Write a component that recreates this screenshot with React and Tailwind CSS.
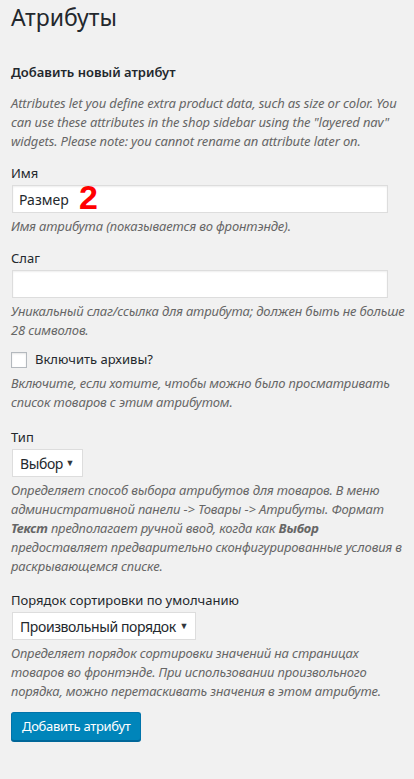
const font = { fontFamily: '"Noto Sans", "Open Sans", sans-serif' };

function Desc({ lines }) {
  return (
    <p className="text-[13px] leading-[19px] italic text-[#666] tracking-[-0.15px]">
      {lines.map((l, i) => (
        <span key={i} className="block whitespace-nowrap">
          {l}
        </span>
      ))}
    </p>
  );
}

function Arrow() {
  return <span className="text-[9px] text-[#32373c] ml-auto">▼</span>;
}

export default function App() {
  return (
    <div
      className="min-h-[779px] w-[414px] bg-[#f1f1f1] px-[11px] text-[#23282d] overflow-hidden"
      style={font}
    >
      <h1 className="pt-[3px] text-[23px] leading-[29px] font-normal">Атрибуты</h1>

      <h2 className="mt-[31px] text-[13px] leading-[19px] font-semibold">
        Добавить новый атрибут
      </h2>

      <div className="mt-[12px]">
        <Desc
          lines={[
            "Attributes let you define extra product data, such as size or color. You",
            'can use these attributes in the shop sidebar using the "layered nav"',
            "widgets. Please note: you cannot rename an attribute later on.",
          ]}
        />
      </div>

      {/* name */}
      <div className="mt-[13px]">
        <label className="block text-[13px] leading-[19px]">Имя</label>
        <div className="relative mt-[2px] w-[376px] h-[28px] ml-px bg-white border border-[#ddd] shadow-[inset_0_1px_2px_rgba(0,0,0,0.07)] flex items-center px-[6px] text-[14px]">
          Размер
          <span
            className="absolute left-[66px] top-[-6px] text-[34px] leading-[34px] font-bold text-[#f00]"
            style={{ fontFamily: '"Liberation Sans", Arial, sans-serif' }}
          >
            2
          </span>
        </div>
        <div className="mt-[4px]">
          <Desc lines={["Имя атрибута (показывается во фронтэнде)."]} />
        </div>
      </div>

      {/* slug */}
      <div className="mt-[13px]">
        <label className="block text-[13px] leading-[19px]">Слаг</label>
        <div className="mt-[2px] w-[376px] h-[28px] ml-px bg-white border border-[#ddd] shadow-[inset_0_1px_2px_rgba(0,0,0,0.07)]" />
        <div className="mt-[4px]">
          <Desc
            lines={[
              "Уникальный слаг/ссылка для атрибута; должен быть не больше",
              "28 символов.",
            ]}
          />
        </div>
      </div>

      {/* archives */}
      <div className="mt-[11px]">
        <div className="flex items-center h-[18px]">
          <span className="w-[16px] h-[16px] bg-white border border-[#b4b9be] shadow-[inset_0_1px_2px_rgba(0,0,0,0.1)]" />
          <span className="ml-[8px] text-[13px]">Включить архивы?</span>
        </div>
        <div className="mt-[5px]">
          <Desc
            lines={[
              "Включите, если хотите, чтобы можно было просматривать",
              "список товаров с этим атрибутом.",
            ]}
          />
        </div>
      </div>

      {/* type */}
      <div className="mt-[16px]">
        <label className="block text-[13px] leading-[19px]">Тип</label>
        <div className="mt-[2px] ml-px w-[71px] h-[28px] bg-white border border-[#ddd] flex items-center pl-[7px] pr-[8px] text-[14px] tracking-[-0.4px] whitespace-nowrap">
          Выбор
          <Arrow />
        </div>
        <div className="mt-[4px]">
          <p className="text-[13px] leading-[19px] italic text-[#666] tracking-[-0.15px]">
            <span className="block whitespace-nowrap">
              Определяет способ выбора атрибутов для товаров. В меню
            </span>
            <span className="block whitespace-nowrap">
              административной панели -&gt; Товары -&gt; Атрибуты. Формат
            </span>
            <span className="block whitespace-nowrap">
              <b className="font-bold">Текст</b> предполагает ручной ввод, когда как{" "}
              <b className="font-bold">Выбор</b>
            </span>
            <span className="block whitespace-nowrap">
              предоставляет предварительно сконфигурированные условия в
            </span>
            <span className="block whitespace-nowrap">раскрывающемся списке.</span>
          </p>
        </div>
      </div>

      {/* order */}
      <div className="mt-[15px]">
        <label className="block text-[13px] leading-[19px]">
          Порядок сортировки по умолчанию
        </label>
        <div className="mt-[2px] ml-px w-[184px] h-[28px] bg-white border border-[#ddd] flex items-center pl-[7px] pr-[7px] text-[14px] tracking-[-0.4px] whitespace-nowrap">
          Произвольный порядок
          <Arrow />
        </div>
        <div className="mt-[4px]">
          <Desc
            lines={[
              "Определяет порядок сортировки значений на страницах",
              "товаров во фронтэнде. При использовании произвольного",
              "порядка, можно перетаскивать значения в этом атрибуте.",
            ]}
          />
        </div>
      </div>

      <button className="mt-[11px] h-[29px] px-[10px] bg-[#0085ba] border border-[#0073aa] border-b-[#006799] rounded-[3px] text-white text-[13px] tracking-[-0.3px] shadow-[0_1px_0_#006799]">
        Добавить атрибут
      </button>
    </div>
  );
}
